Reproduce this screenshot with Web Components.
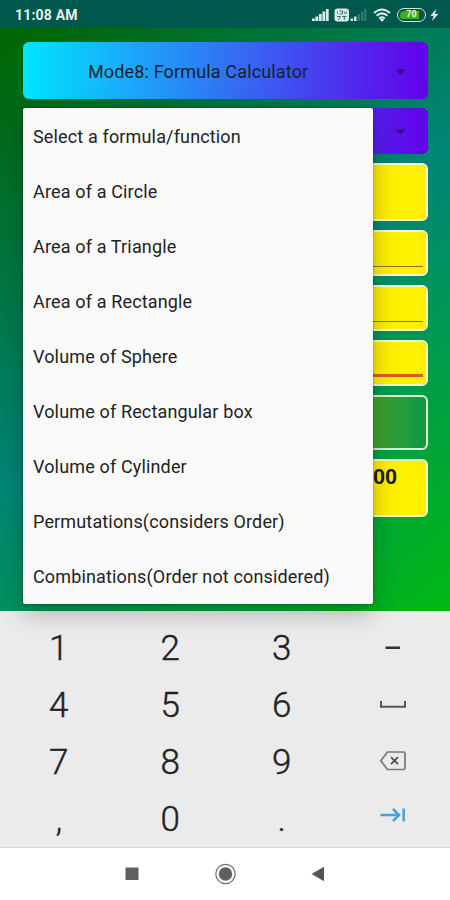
<!DOCTYPE html>
<html lang="en">
<head>
<meta charset="UTF-8">
<title>Formula Calculator</title>
<style>
    body {
        margin: 0;
        width: 450px;
        height: 900px;
        overflow: hidden;
        font-family: Roboto, "Liberation Sans", sans-serif;
        color: #222;
    }
</style>
</head>
<body>
<phone-screen>
    <status-bar slot="status" time="11:08 AM" battery="70"></status-bar>

    <spinner-field size="57">Mode8: Formula Calculator</spinner-field>
    <spinner-field size="45.5"></spinner-field>
    <value-box size="58"></value-box>
    <value-box size="46" line="thin"></value-box>
    <value-box size="46" line="thin"></value-box>
    <value-box size="46" line="focus"></value-box>
    <value-box size="55" kind="button"></value-box>
    <value-box size="58">00</value-box>

    <dropdown-list slot="popup">
        <dropdown-item>Select a formula/function</dropdown-item>
        <dropdown-item>Area of a Circle</dropdown-item>
        <dropdown-item>Area of a Triangle</dropdown-item>
        <dropdown-item>Area of a Rectangle</dropdown-item>
        <dropdown-item>Volume of Sphere</dropdown-item>
        <dropdown-item>Volume of Rectangular box</dropdown-item>
        <dropdown-item>Volume of Cylinder</dropdown-item>
        <dropdown-item>Permutations(considers Order)</dropdown-item>
        <dropdown-item>Combinations(Order not considered)</dropdown-item>
    </dropdown-list>

    <num-keyboard slot="keyboard"></num-keyboard>
    <nav-bar slot="nav"></nav-bar>
</phone-screen>

<script>
// Whole screen: status bar, form, keyboard, navigation
class PhoneScreen extends HTMLElement {
    constructor() {
        super();
        this.attachShadow({ mode: 'open' });
    }

    connectedCallback() {
        this.shadowRoot.innerHTML = `
            <style>
                :host {
                    display: flex;
                    flex-direction: column;
                    width: 450px;
                    height: 900px;
                    background: #fff;
                }

                .app {
                    position: relative;
                    z-index: 1;
                    height: 583px;
                    box-sizing: border-box;
                    padding: 14px 22px 0 23px;
                    background: linear-gradient(142.3deg, #006400, #008577 50%, #00b812);
                }

                .form {
                    display: flex;
                    flex-direction: column;
                    gap: 9.13px;
                }
            </style>
            <slot name="status"></slot>
            <div class="app">
                <div class="form"><slot></slot></div>
                <slot name="popup"></slot>
            </div>
            <slot name="keyboard"></slot>
            <slot name="nav"></slot>
        `;
    }
}

class StatusBar extends HTMLElement {
    constructor() {
        super();
        this.attachShadow({ mode: 'open' });
    }

    connectedCallback() {
        this.shadowRoot.innerHTML = `
            <style>
                :host {
                    display: flex;
                    justify-content: space-between;
                    height: 28px;
                    box-sizing: border-box;
                    padding: 0 11px 0 15px;
                    background: #00574b;
                    color: #e4f0ee;
                }

                .time {
                    font-size: 14px;
                    font-weight: 700;
                    line-height: 30px;
                    letter-spacing: 0.2px;
                }

                .icons {
                    display: flex;
                    align-items: center;
                    height: 29px;
                }

                .battery {
                    display: flex;
                    align-items: center;
                    justify-content: center;
                    width: 29px;
                    height: 14px;
                    margin: 0 4px 0 6px;
                    box-sizing: border-box;
                    border: 1.5px solid #d6e6e2;
                    border-radius: 7px;
                    background: linear-gradient(90deg, #3dae1c 80%, #00574b 80%) content-box;
                    padding: 1.5px;
                    font-size: 9px;
                    font-weight: 700;
                    line-height: 9px;
                    color: #eef8c8;
                }
            </style>
            <span class="time">${this.getAttribute('time')}</span>
            <div class="icons">
                <svg width="17" height="13" fill="#dceae7">
                    <path d="M0 13v-2.500h2.800v2.500zM3.400 13V8.500h2.800V13zM6.900 13V6h2.800v7zM10.400 13V3.500h2.800V13zM13.900 13V1h2.800v12z"/>
                </svg>
                <svg width="16" height="14" style="margin-left:5px">
                    <rect x="0.500" y="0.500" width="14.500" height="13" rx="3" fill="#dceae7"/>
                    <path d="M3.500 3.500v2M5.500 3h3v3h-3M10 3.500l1.500 2.500 1.500-2.500M3 8.500h3.500l-2 3.500M8 8.500h4.500M10.300 8.500v3.500" fill="none" stroke="#2f756b"/>
                </svg>
                <svg width="17" height="13">
                    <path d="M0.500 13v-2.500h2.500v2.500zM4 13V8.500h2.500v4.500z" fill="#dceae7"/>
                    <path d="M7.500 13V6h2.500v7zM11 13V3.500h2.300V13zM14.200 13V1h2.300v12z" fill="#35786e"/>
                </svg>
                <svg width="18" height="14" style="margin-left:6px" viewBox="0 0 18 14" fill="none" stroke="#dceae7" stroke-width="2">
                    <path d="M1 5Q9-2 17 5M3.600 7.800Q9 3 14.400 7.800M6.200 10.400Q9 8 11.800 10.400"/>
                    <path d="M9 14l-2.300-2.700q2.300-1.700 4.600 0z" fill="#dceae7" stroke="none"/>
                </svg>
                <span class="battery">${this.getAttribute('battery')}</span>
                <svg width="9" height="12" fill="#e4f0ee">
                    <path d="M6.300 0L0.300 6.700h3.300L2 12l6.400-7H5z"/>
                </svg>
            </div>
        `;
    }
}

class SpinnerField extends HTMLElement {
    constructor() {
        super();
        this.attachShadow({ mode: 'open' });
    }

    connectedCallback() {
        this.shadowRoot.innerHTML = `
            <style>
                :host {
                    display: flex;
                    align-items: center;
                    height: ${this.getAttribute('size')}px;
                    box-sizing: border-box;
                    padding: 2px 22px 0 65px;
                    border-radius: 6px;
                    background: linear-gradient(90deg, #00e5ff, #6200ea);
                    font-size: 18px;
                    letter-spacing: 0.15px;
                    white-space: nowrap;
                    color: #10242e;
                }

                .label {
                    flex: 1;
                }
            </style>
            <span class="label"><slot></slot></span>
            <svg width="11" height="6"><path d="M1 0.500h9L5.500 5.500z" fill="#30087c"/></svg>
        `;
    }
}

// Yellow field, optionally with an input underline, or the green button
class ValueBox extends HTMLElement {
    constructor() {
        super();
        this.attachShadow({ mode: 'open' });
    }

    connectedCallback() {
        const line = this.getAttribute('line');
        const isButton = this.getAttribute('kind') === 'button';
        const fill = isButton
            ? 'linear-gradient(90deg, #8bc34a 0%, #43a22c 87%, #159a43 98%)'
            : 'linear-gradient(90deg, #ffd600, #fff000 93%)';

        this.shadowRoot.innerHTML = `
            <style>
                :host {
                    display: flex;
                    flex-direction: column;
                    height: ${this.getAttribute('size')}px;
                    box-sizing: border-box;
                    border: 2px solid ${isButton ? '#d5efd0' : '#f4f9cf'};
                    border-radius: 6px;
                    padding: 4px 3px 7px;
                    background: ${fill} padding-box;
                    text-align: right;
                    font-size: 21px;
                    font-weight: 700;
                    line-height: 24px;
                    color: #1c1c08;
                }

                .value {
                    flex: 1;
                    padding-right: 26px;
                }

                .thin {
                    height: 1px;
                    background: #7f7a08;
                }

                .focus {
                    height: 3px;
                    background: #dd5a28;
                }
            </style>
            <div class="value"><slot></slot></div>
            ${line ? `<div class="${line}"></div>` : ''}
        `;
    }
}

class DropdownList extends HTMLElement {
    constructor() {
        super();
        this.attachShadow({ mode: 'open' });
    }

    connectedCallback() {
        this.shadowRoot.innerHTML = `
            <style>
                :host {
                    display: block;
                    position: absolute;
                    left: 23px;
                    top: 80px;
                    width: 350px;
                    height: 495.5px;
                    border-radius: 2px;
                    background: #fafafa;
                    box-shadow: 0 9px 24px rgba(0, 0, 0, 0.26), 0 0 3px rgba(0, 0, 0, 0.35);
                }
            </style>
            <slot></slot>
        `;
    }
}

class DropdownItem extends HTMLElement {
    constructor() {
        super();
        this.attachShadow({ mode: 'open' });
    }

    connectedCallback() {
        this.shadowRoot.innerHTML = `
            <style>
                :host {
                    display: flex;
                    align-items: center;
                    height: 55px;
                    box-sizing: border-box;
                    padding: 2px 0 0 10px;
                    font-size: 18px;
                    letter-spacing: 0.15px;
                    white-space: nowrap;
                }
            </style>
            <slot></slot>
        `;
    }
}

const KEY_ICONS = {
    minus: '<svg width="16" height="4"><rect x="0.500" y="0.500" width="14.500" height="2.500" fill="#333"/></svg>',
    space: '<svg width="26" height="8"><path d="M1 0v5.800h24V0" fill="none" stroke="#555" stroke-width="2"/></svg>',
    backspace: `<svg width="28" height="20" fill="none" stroke="#777" stroke-width="1.700">
            <path d="M8.500 1H24.500a1.500 1.500 0 0 1 1.500 1.500v14.500a1.500 1.500 0 0 1-1.500 1.500H8.500L1.800 9.750z"/>
            <path d="M12 6.200l7 7M19 6.200l-7 7" stroke="#555" stroke-width="1.900"/>
        </svg>`,
    next: `<svg width="26" height="16" fill="none" stroke="#3fa3dc" stroke-width="2.500">
            <path d="M0.500 8h18M13 2l6 6-6 6M23.700 1.500v13"/>
        </svg>`
};

class NumKeyboard extends HTMLElement {
    constructor() {
        super();
        this.attachShadow({ mode: 'open' });
        this.keys = ['1', '2', '3', 'minus', '4', '5', '6', 'space', '7', '8', '9', 'backspace', ',', '0', '.', 'next'];
    }

    connectedCallback() {
        this.shadowRoot.innerHTML = `
            <style>
                :host {
                    display: grid;
                    grid-template-columns: repeat(4, 1fr);
                    grid-auto-rows: 57px;
                    height: 237px;
                    box-sizing: border-box;
                    padding: 9px 1px 0 3px;
                    background: #ebebeb;
                    border-bottom: 1px solid #d9d9d9;
                    font-size: 35px;
                    font-weight: 300;
                    -webkit-text-stroke: 0.4px #222;
                }

                .key {
                    display: flex;
                    align-items: center;
                    justify-content: center;
                }

                .minus {
                    padding-bottom: 2px;
                }

                .space {
                    padding-bottom: 2px;
                }

                .next {
                    padding-bottom: 10px;
                }

                .backspace {
                    padding-bottom: 3px;
                }
            </style>
            ${this.keys.map(key => `<div class="key ${KEY_ICONS[key] ? key : ''}">${KEY_ICONS[key] || key}</div>`).join('')}
        `;
    }
}

class NavBar extends HTMLElement {
    constructor() {
        super();
        this.attachShadow({ mode: 'open' });
    }

    connectedCallback() {
        this.shadowRoot.innerHTML = `
            <style>
                :host {
                    display: flex;
                    justify-content: space-between;
                    align-items: center;
                    height: 51px;
                    padding: 0 125px;
                }
            </style>
            <svg width="14" height="14"><rect x="0.500" y="0.500" width="13" height="12.500" fill="#606060"/></svg>
            <svg width="22" height="22">
                <circle cx="11.500" cy="11" r="9.700" fill="none" stroke="#707070" stroke-width="1.200"/>
                <circle cx="11.500" cy="11" r="6.700" fill="#606060"/>
            </svg>
            <svg width="14" height="16"><path d="M13 0.800v14.400L0.500 8z" fill="#555"/></svg>
        `;
    }
}

customElements.define('phone-screen', PhoneScreen);
customElements.define('status-bar', StatusBar);
customElements.define('spinner-field', SpinnerField);
customElements.define('value-box', ValueBox);
customElements.define('dropdown-list', DropdownList);
customElements.define('dropdown-item', DropdownItem);
customElements.define('num-keyboard', NumKeyboard);
customElements.define('nav-bar', NavBar);
</script>
</body>
</html>
